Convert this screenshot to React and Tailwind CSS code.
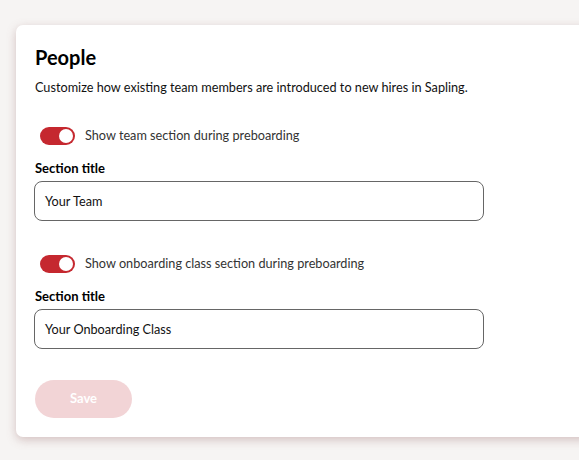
import React from "react";

function Toggle() {
  return (
    <div className="relative w-[35px] h-[18px] rounded-full bg-[#c5282f] shrink-0">
      <div className="absolute right-[2px] top-[2px] w-[14px] h-[14px] rounded-full bg-white" />
    </div>
  );
}

function Section({ label, value }) {
  return (
    <div>
      <div className="flex items-center gap-[10px] pl-[5px]">
        <Toggle />
        <span className="text-[12.7px] text-[#333]">{label}</span>
      </div>
      <div className="mt-[15px] text-[13px] font-bold text-black leading-[16px]">Section title</div>
      <div className="mt-[5px] -ml-[1px] w-[450px] h-[40px] rounded-[8px] border border-[#666] flex items-center px-[10px] text-[12.7px] text-[#111]">
        {value}
      </div>
    </div>
  );
}

export default function App() {
  return (
    <div
      className="w-[579px] h-[460px] bg-[#f6f4f3] overflow-hidden pt-[25px] pl-[16px]"
      style={{ fontFamily: "Lato, 'Open Sans', sans-serif" }}
    >
      <div className="w-[600px] h-[412px] bg-white rounded-[7px] shadow-[0_3px_10px_rgba(150,100,100,0.35)] pl-[19px] pt-[20px]">
        <h1 className="text-[20px] font-bold text-black leading-[24px]">People</h1>
        <p className="mt-[10px] text-[12.7px] text-[#111] leading-[16px]">
          Customize how existing team members are introduced to new hires in Sapling.
        </p>
        <div className="mt-[31px]">
          <Section label="Show team section during preboarding" value="Your Team" />
        </div>
        <div className="mt-[33px]">
          <Section label="Show onboarding class section during preboarding" value="Your Onboarding Class" />
        </div>
        <button className="mt-[31px] w-[97px] h-[38px] rounded-full bg-[#f2d4d6] text-white font-bold text-[13px]">
          Save
        </button>
      </div>
    </div>
  );
}
